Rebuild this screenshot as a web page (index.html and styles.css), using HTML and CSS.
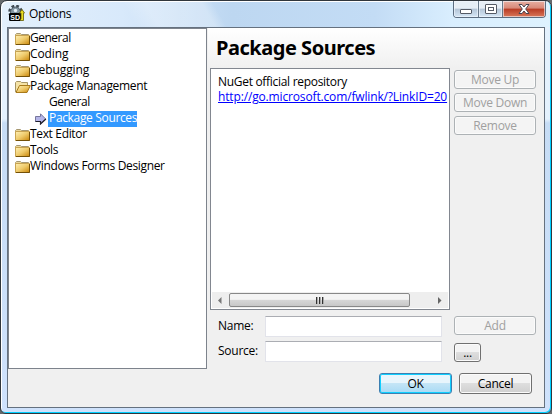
FILE: index.html
```html
<!DOCTYPE html>
<html lang="en">
<head>
<meta charset="utf-8">
<title>Options</title>
<link rel="stylesheet" href="styles.css">
</head>
<body>
<svg width="0" height="0" class="defs">
  <defs>
    <linearGradient id="gold" x1="0" y1="0" x2="1" y2="1"><stop offset="0" stop-color="#fff0b4"/><stop offset=".5" stop-color="#efcb6c"/><stop offset="1" stop-color="#c98508"/></linearGradient>
    <symbol id="folder" viewBox="0 0 16 14">
      <path d="M.5 12.5V2.5L1.5 1.5H5.5L6.5 2.5H13.5V4" fill="#e9d69a" stroke="#a69872"/>
      <path d="M.5 3.500H14.5V12.5H.5Z" fill="url(#gold)" stroke="#c9a451"/>
      <path d="M1 12.5H14.5V4" fill="none" stroke="#735008"/>
    </symbol>
    <symbol id="folder-open" viewBox="0 0 16 14">
      <path d="M.5 12V2.5L1.5 1.5H5.5L6.5 2.5H12.5V5" fill="#f5e3a6" stroke="#a69565"/>
      <path d="M1 12.5L4.5 5.5H15.3L12 12.5Z" fill="url(#gold)" stroke="#a87a1b"/>
    </symbol>
  </defs>
</svg>
<div class="window">
  <header class="titlebar">
    <svg class="app-icon" width="17" height="17" viewBox="0 0 17 17">
      <circle cx="7.500" cy="7" r="6" fill="none" stroke="#3f4a52" stroke-width="2.600" stroke-dasharray="2.700 2.012"/>
      <circle cx="7.500" cy="7" r="5" fill="#8295a2" stroke="#4d5a64"/>
      <circle cx="7.500" cy="5.500" r="1.700" fill="#e4eef6"/>
      <rect x="1" y="8" width="12" height="8" rx="1.500" fill="#000"/>
      <text x="2.300" y="14.600" class="badge">SD</text>
      <path d="M12.500 15.500H15.500V8H16.500L14 4.500L11.500 8H13V14H12.500Z" fill="#e8dc20" stroke="#5f5a08" stroke-width=".8"/>
    </svg>
    <span class="title">Options</span>
    <div class="controls">
      <span class="ctl min"><i></i></span><span class="ctl max"><i></i></span><span class="ctl close"><svg width="12" height="10" viewBox="0 0 12 10"><path d="M1 .5H4L6 3L8 .5H11L7.700 5L11 9.500H8L6 7L4 9.500H1L4.300 5Z" fill="#fff" stroke="#4b4550"/></svg></span>
    </div>
  </header>
  <main class="client">
    <ul class="tree">
      <li><svg class="ico"><use href="#folder"/></svg><span class="tight">General</span></li>
      <li><svg class="ico"><use href="#folder"/></svg><span class="wide">Coding</span></li>
      <li><svg class="ico"><use href="#folder"/></svg><span class="wide">Debugging</span></li>
      <li><svg class="ico"><use href="#folder-open"/></svg><span>Package Management</span></li>
      <li class="child"><span class="tight">General</span></li>
      <li class="child"><svg class="arrow" width="12" height="12" viewBox="0 0 12 12"><path d="M.5 3.500H5.500V.8L10.700 6L5.500 11V8.500H.5Z" fill="#b5b5e8" stroke="#77779c"/><path d="M.5 8.500H5.500V11L10.900 6" fill="none" stroke="#20202c" stroke-width="1.200"/></svg><span class="selected">Package Sources</span></li>
      <li><svg class="ico"><use href="#folder"/></svg><span>Text Editor</span></li>
      <li><svg class="ico"><use href="#folder"/></svg><span>Tools</span></li>
      <li><svg class="ico"><use href="#folder"/></svg><span>Windows Forms Designer</span></li>
    </ul>
    <section class="panel">
      <h1>Package Sources</h1>
      <div class="sources">
        <div class="list">
          <div class="name">NuGet official repository</div>
          <div class="url">http://go.microsoft.com/fwlink/?LinkID=20</div>
          <div class="scroll">
            <svg width="15" height="16"><path d="M9.500 5V12L6 8.500Z" fill="#777"/></svg>
            <div class="thumb"><i></i><i></i><i></i></div>
            <svg width="15" height="16"><path d="M5 5V12L8.500 8.500Z" fill="#666"/></svg>
          </div>
        </div>
        <div class="side">
          <button disabled>Move Up</button><button disabled>Move Down</button><button disabled>Remove</button>
        </div>
      </div>
      <div class="field first"><label>Name:</label><input><button disabled>Add</button></div>
      <div class="field"><label>Source:</label><input><button class="browse">...</button></div>
      <div class="actions"><button class="ok">OK</button><button>Cancel</button></div>
    </section>
  </main>
</div>
</body>
</html>
```
FILE: styles.css
```css
* { box-sizing: border-box; }
body { margin: 0; width: 552px; height: 414px; overflow: hidden; background: #65696c; font: 12px/16px "Open Sans", "Noto Sans", sans-serif; color: #000; }
.defs { position: absolute; }
.window { width: 552px; height: 414px; padding: 0 5px 0 6px; border: 1px solid #30363c; border-radius: 7px 7px 6px 6px; background: linear-gradient(60deg, #fff0 0 24%, #ffffff45 28% 38%, #fff0 40%) 0 0/100% 26px no-repeat, linear-gradient(90deg, #e3f0fc 0, #d8e9fb 22%, #bdd7f1 42%, #c3dcf5 68%, #d9eefe 82%, #def2fe) 0 0/100% 26px no-repeat, linear-gradient(#e4f1fd 0 118px, #c6dcf5 122px, #cfe2fc); box-shadow: inset -1px -1px #00cfff, inset 1px 1px #fff; overflow: hidden; }
.titlebar { display: flex; height: 26px; }
.app-icon { margin: 4px 0 0 1px; }
.title { margin: 5px 0 0 4px; letter-spacing: -.3px; }
.badge { font: bold 7px "Liberation Sans", sans-serif; fill: #fff; }
.controls { display: flex; width: 93px; height: 17px; margin: 0 0 0 auto; border: 1px solid #5c6d80; border-top: 0; border-radius: 0 0 4px 4px; overflow: hidden; }
.ctl { display: flex; align-items: center; justify-content: center; width: 25px; border-right: 1px solid #68798a; background: linear-gradient(#e6eef6 0 45%, #b4c5d7 50%, #d6e7f6); box-shadow: inset 0 0 0 1px #f3f9ff99; }
.close { width: 42px; border: 0; background: linear-gradient(#e8b0a3, #d88878 45%, #b83b24 50%, #d9785a); }
.min i { width: 12px; height: 5px; border: 1px solid #555b66; border-radius: 1px; background: #fff; margin-top: 4px; }
.max i { width: 12px; height: 10px; border: 1px solid #555b66; border-radius: 1px; background: linear-gradient(#fff, #fff) center/4px 2px no-repeat, linear-gradient(#555b66, #555b66) center/6px 4px no-repeat, #fff; }
.client { display: flex; width: 538px; height: 381px; border: 1px solid #65717f; background: #f0f0f0; }
.tree { width: 199px; height: 341px; margin: 0; padding: 2px 0 0 6px; list-style: none; background: #fff; border: 1px solid #7d838c; letter-spacing: -.34px; }
.tree li { display: flex; height: 16px; white-space: nowrap; line-height: 14px; }
.tree .tight { letter-spacing: -.5px; }
.tree .wide { letter-spacing: -.1px; }
.ico { width: 16px; height: 14px; margin: 1px -1px 0 0; }
.child { padding-left: 34px; }
.arrow { margin: 2px 2px 0 -14px; }
.tree .selected { width: 89px; height: 16px; padding-left: 1px; background: #3399ff; color: #fff; }
.child .selected { margin-left: -1px; }
.panel { width: 336px; margin-left: 1px; background: linear-gradient(#fff, #f0f0f0 40px); }
h1 { height: 40px; margin: 0; padding: 6px 0 0 8px; font: bold 20px/28px "Noto Sans", sans-serif; letter-spacing: -.47px; }
.sources { display: flex; margin-left: 2px; }
.list { display: flex; flex-direction: column; width: 240px; height: 242px; padding: 5px 1px 1px; border: 1px solid #828790; background: #fff; }
.name, .url { height: 15px; line-height: 15px; padding-left: 6px; white-space: nowrap; letter-spacing: -.3px; }
.url { width: 236px; height: 16px; color: #0000ff; text-decoration: underline; letter-spacing: -.15px; line-height: 16px; }
.scroll { display: flex; width: 236px; height: 16px; margin-top: auto; background: #eee; }
.thumb { display: flex; justify-content: center; gap: 1px; width: 181px; margin: 1px 23px 1px 2px; padding-top: 3px; border: 1px solid #888; border-radius: 2px; background: linear-gradient(#f4f4f4 0 45%, #d7d7d7 50%, #c8c8c8); }
.thumb i { width: 2px; height: 7px; background: #333; border-right: 1px solid #aaa; }
.side { display: flex; flex-direction: column; gap: 4px; margin: 2px 0 0 4px; }
button { width: 82px; height: 19px; padding: 0; border: 1px solid #707070; border-radius: 3px; background: linear-gradient(#f3f3f3 0 48%, #dedede 50%, #d0d0d0); box-shadow: inset 0 0 0 1px #fbfbfb; font: inherit; line-height: 16px; letter-spacing: -.25px; color: #000; }
button:disabled { border-color: #adb2b5; background: #f4f4f4; color: #a0a0a0; }
.field { display: flex; height: 21px; margin: 4px 0 0 10px; }
.field.first { margin-top: 6px; }
label { width: 47px; padding-top: 2px; letter-spacing: -.25px; }
input { width: 177px; height: 21px; padding: 0; border: 1px solid #e2e3ea; border-top-color: #abadb3; background: #fff; }
.field button { margin-left: 12px; }
.field .browse { width: 27px; margin-top: 2px; }
.actions { display: flex; gap: 7px; margin: 11px 0 0 171px; }
.actions button { width: 73px; height: 21px; }
.actions .ok { border-color: #3c7fb1; background: linear-gradient(#e8f5fc 0 48%, #c4e5f6 50%, #a8daf5); box-shadow: inset 0 0 0 1px #10cfff; }
```
